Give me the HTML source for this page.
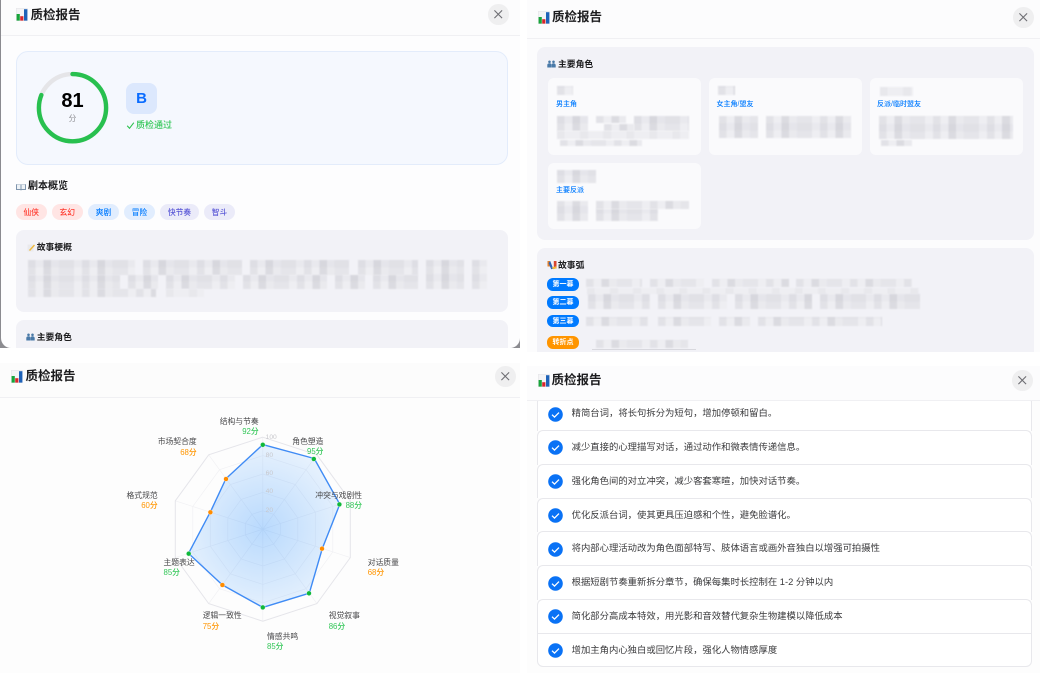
<!DOCTYPE html>
<html lang="zh-CN">
<head>
<meta charset="utf-8">
<title>质检报告</title>
<style>
*{box-sizing:border-box;margin:0;padding:0}
html,body{width:1040px;height:687px;overflow:hidden;background:#fff}
body{font-family:"Liberation Sans","Noto Sans CJK SC",sans-serif;color:#1c1c1e}
#w{position:absolute;left:0;top:0;width:1040px;height:687px;overflow:hidden;background:#fff;filter:blur(.35px)}
.a,.panel,.m,.t,.box,.card,.tag,.badge,.close,.row,.lb{position:absolute}
.t{white-space:nowrap;line-height:1}
.panel{background:#fdfdfe;overflow:hidden}
.hdr{position:absolute;left:0;right:0;top:0;background:#fcfcfd;border-bottom:1px solid #f0f0f3}
.title{font-size:12.5px;font-weight:600;color:#1c1c1e}
.close{width:20.5px;height:20.5px;border-radius:50%;background:#efeff0}
.close svg{position:absolute;left:0;top:0}
.box{background:#f2f2f7;border-radius:8px}
.card{background:#fafafc;border-radius:6px}
.h{font-size:8.8px;font-weight:600;color:#1c1c1e}
.role{font-size:7px;color:#007aff;font-weight:500}
.tag{height:16px;border-radius:8px;font-size:7.7px;line-height:17px;text-align:center;font-weight:500}
.red{background:#ffe5e4;color:#ff3b30}
.blue{background:#e1edfe;color:#007aff}
.ind{background:#ebebf9;color:#5856d6}
.badge{left:547px;width:32px;height:12.5px;border-radius:6px;background:#007aff;color:#fff;font-size:7px;line-height:14px;text-align:center;font-weight:600}
.m{filter:blur(.8px);background-color:#e9e9ee;background-image:repeating-linear-gradient(90deg,rgba(110,110,125,.09) 0 7.7px,rgba(110,110,125,0) 7.7px 15.4px,rgba(110,110,125,.15) 15.4px 23.1px,rgba(110,110,125,.03) 23.1px 30.8px,rgba(110,110,125,.07) 30.8px 46.2px,rgba(110,110,125,0) 46.2px 53.9px),repeating-linear-gradient(0deg,rgba(255,255,255,.22) 0 7.5px,rgba(255,255,255,0) 7.5px 15px)}
.l{background-color:#eeeef2;background-image:repeating-linear-gradient(90deg,rgba(110,110,125,.05) 0 7.7px,rgba(110,110,125,0) 7.7px 23.1px)}
.row{left:10px;width:495.3px;height:34.5px;background:#fff;border:1px solid #e8e8ec;border-bottom:0;border-radius:6px 6px 0 0}
.row .c{position:absolute;left:9.6px;top:9.4px}
.row .x{position:absolute;left:33.6px;top:0;line-height:32.5px;font-size:9.35px;color:#3a3a3c;white-space:nowrap}
.lb{font-size:7.8px;line-height:10.2px;color:#48484a;white-space:nowrap}
.lb b{display:block;font-weight:500}
.g{color:#34c759}.o{color:#ff9500}
.tick{font-size:6.7px;color:#c7c7cc;position:absolute;left:265.6px;line-height:1}
</style>
</head>
<body>
<div id="w">

<!-- dark edge behind first panel -->
<div class="a" style="left:0;top:0;width:520px;height:348px;background:#8b8b90"></div>

<!-- TOP LEFT -->
<div class="panel" style="left:1px;top:0;width:519px;height:348px;border-radius:0 0 10px 10px">
  <div class="hdr" style="height:36px"></div>
</div>
<svg class="a" style="left:16px;top:8px" width="12" height="13" viewBox="0 0 12 13"><rect x=".3" y=".3" width="11" height="12.4" fill="#f4f4f6" stroke="#e2e2e6" stroke-width=".5"/><rect x=".6" y="6" width="3.2" height="6.6" fill="#17a53a"/><rect x="4.2" y="8.2" width="3.2" height="4.4" fill="#d8262c"/><rect x="8" y="1.2" width="3.4" height="11.4" fill="#1e62b8"/></svg>
<div class="t title" style="left:30.5px;top:8.5px">质检报告</div>
<div class="close" style="left:488px;top:4px"><svg width="20.5" height="20.5"><path d="M6.4 6.4l7.7 7.7M14.1 6.4l-7.7 7.7" stroke="#6e6e73" stroke-width="1.1" fill="none"/></svg></div>

<div class="a" style="left:16px;top:51px;width:492px;height:113.5px;background:#f5f8fe;border:1px solid #e3ecfb;border-radius:12px"></div>
<svg class="a" style="left:36px;top:71px" width="73" height="73" viewBox="0 0 73 73"><circle cx="36.5" cy="36.7" r="33.6" fill="none" stroke="#e5e5e8" stroke-width="4.4"/><circle cx="36.5" cy="36.7" r="33.6" fill="none" stroke="#28c04f" stroke-width="4.4" stroke-linecap="round" stroke-dasharray="171 212" transform="rotate(-90 36.5 36.7)"/></svg>
<div class="t" style="left:52px;width:41px;text-align:center;top:91px;font-size:20px;font-weight:700;color:#000">81</div>
<div class="t" style="left:52px;width:41px;text-align:center;top:115px;font-size:7.7px;color:#8e8e93">分</div>
<div class="a" style="left:126px;top:83px;width:31px;height:31px;border-radius:8px;background:#dce8fd;color:#0a6cff;font-size:15px;font-weight:700;line-height:31px;text-align:center">B</div>
<svg class="a" style="left:126px;top:121px" width="9" height="9"><path d="M1.2 4.8l2.3 2.5 4.3-5.6" fill="none" stroke="#2cc24f" stroke-width="1.1"/></svg>
<div class="t" style="left:136px;top:121px;font-size:9px;color:#34c759;font-weight:500">质检通过</div>

<svg class="a" style="left:16px;top:183px" width="10" height="8" viewBox="0 0 10 8"><path d="M0 1.2h4.6l.4.5.4-.5H10V7H5.6l-.6.6-.6-.6H0z" fill="#7f95ad"/><path d="M1 1.6h3.5V6H1zM5.5 1.6H9V6H5.5z" fill="#eef2f6"/></svg>
<div class="t" style="left:28px;top:182px;font-size:10px;font-weight:600">剧本概览</div>

<div class="tag red" style="left:16px;top:204px;width:30.5px">仙侠</div>
<div class="tag red" style="left:52px;top:204px;width:30.5px">玄幻</div>
<div class="tag blue" style="left:88px;top:204px;width:31px">爽剧</div>
<div class="tag blue" style="left:124px;top:204px;width:31px">冒险</div>
<div class="tag ind" style="left:160px;top:204px;width:39px">快节奏</div>
<div class="tag ind" style="left:204px;top:204px;width:31px">智斗</div>

<div class="box" style="left:16px;top:230px;width:492px;height:82px"></div>
<svg class="a" style="left:27px;top:243px" width="8" height="9" viewBox="0 0 8 9"><rect x=".5" y="1.5" width="6" height="7" fill="#e9e9ec"/><path d="M2 7l5-5.5 1 1L3 8z" fill="#f0b93a"/></svg>
<div class="t h" style="left:36.7px;top:242.5px">故事梗概</div>
<div class="m" style="left:28px;top:260px;width:107px;height:15px"></div>
<div class="m" style="left:143px;top:260px;width:99px;height:15px"></div>
<div class="m" style="left:250px;top:260px;width:99px;height:15px"></div>
<div class="m" style="left:358px;top:260px;width:60px;height:15px"></div>
<div class="m" style="left:426px;top:260px;width:38px;height:29px"></div>
<div class="m" style="left:472px;top:260px;width:15px;height:29px"></div>
<div class="m" style="left:28px;top:275px;width:92px;height:14px"></div>
<div class="m" style="left:128px;top:275px;width:30px;height:14px"></div>
<div class="m" style="left:166px;top:275px;width:69px;height:14px"></div>
<div class="m" style="left:243px;top:275px;width:84px;height:14px"></div>
<div class="m" style="left:335px;top:275px;width:30px;height:14px"></div>
<div class="m" style="left:373px;top:275px;width:45px;height:14px"></div>
<div class="m" style="left:28px;top:289px;width:128px;height:8px"></div>
<div class="m l" style="left:166px;top:289px;width:38px;height:8px"></div>

<div class="box" style="left:16px;top:320px;width:492px;height:28px;border-radius:8px 8px 0 0"></div>
<svg class="a" style="left:26px;top:333px" width="9" height="8" viewBox="0 0 9 8"><g fill="#4a7aa8"><circle cx="2.5" cy="1.8" r="1.3"/><circle cx="6.5" cy="1.8" r="1.3"/><path d="M.3 7.5V5q0-1.8 2.2-1.8T4.4 5v2.5zM4.6 7.5V5q0-1.8 1.9-1.8T8.7 5v2.5z"/></g></svg>
<div class="t h" style="left:36.7px;top:332.5px">主要角色</div>

<!-- TOP RIGHT -->
<div class="panel" style="left:527px;top:0;width:513px;height:352px;background:#fcfcfd">
  <div class="hdr" style="height:39px;background:#fcfcfd"></div>
</div>
<svg class="a" style="left:538px;top:11px" width="12" height="13" viewBox="0 0 12 13"><rect x=".3" y=".3" width="11" height="12.4" fill="#f4f4f6" stroke="#e2e2e6" stroke-width=".5"/><rect x=".6" y="6" width="3.2" height="6.6" fill="#17a53a"/><rect x="4.2" y="8.2" width="3.2" height="4.4" fill="#d8262c"/><rect x="8" y="1.2" width="3.4" height="11.4" fill="#1e62b8"/></svg>
<div class="t title" style="left:552px;top:11px">质检报告</div>
<div class="close" style="left:1013px;top:7px"><svg width="20.5" height="20.5"><path d="M6.4 6.4l7.7 7.7M14.1 6.4l-7.7 7.7" stroke="#6e6e73" stroke-width="1.1" fill="none"/></svg></div>

<div class="box" style="left:537px;top:47px;width:497px;height:193px"></div>
<svg class="a" style="left:547px;top:60px" width="9" height="8" viewBox="0 0 9 8"><g fill="#4a7aa8"><circle cx="2.5" cy="1.8" r="1.3"/><circle cx="6.5" cy="1.8" r="1.3"/><path d="M.3 7.5V5q0-1.8 2.2-1.8T4.4 5v2.5zM4.6 7.5V5q0-1.8 1.9-1.8T8.7 5v2.5z"/></g></svg>
<div class="t h" style="left:558px;top:59.5px">主要角色</div>

<div class="card" style="left:548px;top:78px;width:153px;height:77px"></div>
<div class="card" style="left:709px;top:78px;width:153px;height:77px"></div>
<div class="card" style="left:870px;top:78px;width:153px;height:77px"></div>
<div class="card" style="left:548px;top:163px;width:153px;height:66px"></div>

<div class="m" style="left:557px;top:86px;width:16px;height:9px"></div>
<div class="t role" style="left:556px;top:101px">男主角</div>
<div class="m" style="left:557px;top:116px;width:31px;height:15px"></div>
<div class="m" style="left:596px;top:116px;width:30px;height:7px"></div>
<div class="m" style="left:634px;top:116px;width:55px;height:15px"></div>
<div class="m" style="left:604px;top:124px;width:30px;height:7px"></div>
<div class="m l" style="left:557px;top:131px;width:132px;height:8px"></div>
<div class="m" style="left:560px;top:140px;width:82px;height:6px"></div>

<div class="m" style="left:718px;top:86px;width:17px;height:9px"></div>
<div class="t role" style="left:716.5px;top:101px">女主角/盟友</div>
<div class="m" style="left:719px;top:116px;width:39px;height:22px"></div>
<div class="m" style="left:766px;top:116px;width:85px;height:22px"></div>

<div class="m l" style="left:880px;top:87px;width:33px;height:9px"></div>
<div class="t role" style="left:877px;top:101px">反派/临时盟友</div>
<div class="m" style="left:879px;top:116px;width:134px;height:23px"></div>
<div class="m" style="left:881px;top:140px;width:31px;height:6px"></div>

<div class="m" style="left:557px;top:170px;width:39px;height:13px"></div>
<div class="t role" style="left:556px;top:186.5px">主要反派</div>
<div class="m" style="left:557px;top:201px;width:31px;height:20px"></div>
<div class="m" style="left:596px;top:201px;width:93px;height:8px"></div>
<div class="m" style="left:596px;top:209px;width:62px;height:12px"></div>

<div class="box" style="left:537px;top:248px;width:497px;height:104px;border-radius:8px 8px 0 0"></div>
<svg class="a" style="left:547px;top:260px" width="10" height="10" viewBox="0 0 10 10"><path d="M.5 1h2.6v5.5H.5z" fill="#e8832a"/><path d="M3.2 1l3 7.6-2 .7L1.500 3z" fill="#2b62b8"/><path d="M6.800 1h2.700v7.500H6.800z" fill="#d8452f"/><path d="M4.600 7.500l1.800 1.800 3.100-1-.3-2z" fill="#f0b93a"/></svg>
<div class="t h" style="left:558px;top:260.500px">故事弧</div>

<div class="badge" style="top:278px">第一幕</div>
<div class="badge" style="top:296px">第二幕</div>
<div class="badge" style="top:314.500px">第三幕</div>
<div class="badge" style="top:336px;background:#ff9500">转折点</div>

<div class="m" style="left:586px;top:279px;width:56px;height:8px"></div>
<div class="m" style="left:650px;top:279px;width:54px;height:8px"></div>
<div class="m" style="left:712px;top:279px;width:77px;height:8px"></div>
<div class="m" style="left:796px;top:279px;width:116px;height:8px"></div>
<div class="m l" style="left:587px;top:288px;width:332px;height:6px"></div>
<div class="m" style="left:588px;top:294px;width:62px;height:15px"></div>
<div class="m" style="left:658px;top:294px;width:69px;height:15px"></div>
<div class="m" style="left:735px;top:294px;width:77px;height:15px"></div>
<div class="m" style="left:820px;top:294px;width:100px;height:15px"></div>
<div class="m" style="left:586px;top:317px;width:62px;height:9px"></div>
<div class="m" style="left:658px;top:317px;width:53px;height:9px"></div>
<div class="m" style="left:719px;top:317px;width:31px;height:9px"></div>
<div class="m" style="left:758px;top:317px;width:124px;height:9px"></div>
<div class="m" style="left:596px;top:340px;width:92px;height:8px"></div>
<div class="a" style="left:592px;top:349px;width:104px;height:1px;background:#d8d8de"></div>

<!-- BOTTOM LEFT -->
<div class="panel" style="left:0;top:363px;width:520px;height:310px;background:#fdfdfd">
  <div class="hdr" style="height:34.500px;background:#fcfcfc"></div>
</div>
<svg class="a" style="left:11px;top:369.500px" width="12" height="13" viewBox="0 0 12 13"><rect x=".3" y=".3" width="11" height="12.400" fill="#f4f4f6" stroke="#e2e2e6" stroke-width=".5"/><rect x=".6" y="6" width="3.200" height="6.600" fill="#17a53a"/><rect x="4.200" y="8.200" width="3.200" height="4.400" fill="#d8262c"/><rect x="8" y="1.200" width="3.400" height="11.400" fill="#1e62b8"/></svg>
<div class="t title" style="left:25.500px;top:370px">质检报告</div>
<div class="close" style="left:495px;top:366px"><svg width="20.5" height="20.5"><path d="M6.400 6.400l7.700 7.700M14.100 6.400l-7.700 7.700" stroke="#6e6e73" stroke-width="1.100" fill="none"/></svg></div>

<svg class="a" style="left:0;top:0" width="520" height="687" viewBox="0 0 520 687">
  <defs>
    <radialGradient id="rf" gradientUnits="userSpaceOnUse" cx="262.800" cy="529.200" r="88">
      <stop offset="0" stop-color="#007aff" stop-opacity=".27"/>
      <stop offset="1" stop-color="#007aff" stop-opacity=".08"/>
    </radialGradient>
  </defs>
  <g transform="translate(262.800 529.200)" fill="none">
    <g stroke="#f1f1f4" stroke-width=".7">
      <polygon vector-effect="non-scaling-stroke" transform="scale(18.400)" points="0,-1 .5878,-.809 .9511,-.309 .9511,.309 .5878,.809 0,1 -.5878,.809 -.9511,.309 -.9511,-.309 -.5878,-.809"/>
      <polygon vector-effect="non-scaling-stroke" transform="scale(36.800)" points="0,-1 .5878,-.809 .9511,-.309 .9511,.309 .5878,.809 0,1 -.5878,.809 -.9511,.309 -.9511,-.309 -.5878,-.809"/>
      <polygon vector-effect="non-scaling-stroke" transform="scale(55.200)" points="0,-1 .5878,-.809 .9511,-.309 .9511,.309 .5878,.809 0,1 -.5878,.809 -.9511,.309 -.9511,-.309 -.5878,-.809"/>
      <polygon vector-effect="non-scaling-stroke" transform="scale(73.600)" points="0,-1 .5878,-.809 .9511,-.309 .9511,.309 .5878,.809 0,1 -.5878,.809 -.9511,.309 -.9511,-.309 -.5878,-.809"/>
      <path d="M0 0V-92M0 0L54.100 -74.400M0 0L87.500 -28.400M0 0L87.500 28.400M0 0L54.100 74.400M0 0V92M0 0L-54.100 74.400M0 0L-87.500 28.400M0 0L-87.500 -28.400M0 0L-54.100 -74.400"/>
    </g>
    <polygon vector-effect="non-scaling-stroke" stroke="#e5e5ea" stroke-width="1" transform="scale(92)" points="0,-1 .5878,-.809 .9511,-.309 .9511,.309 .5878,.809 0,1 -.5878,.809 -.9511,.309 -.9511,-.309 -.5878,-.809"/>
  </g>
  <polygon points="262.800,444.600 314.200,458.500 339.800,504.200 322.300,548.500 309.300,593.200 262.800,607.400 222.300,584.900 188.500,553.400 210.300,512.100 226,478.600" fill="url(#rf)" stroke="#3f8bf5" stroke-width="1.400" stroke-linejoin="round"/>
  <g stroke="#fff" stroke-width=".5" stroke-opacity=".7">
    <circle cx="262.800" cy="444.800" r="2.400" fill="#0fb83a"/>
    <circle cx="313.800" cy="459" r="2.400" fill="#0fb83a"/>
    <circle cx="339.400" cy="504.400" r="2.400" fill="#0fb83a"/>
    <circle cx="322" cy="548.700" r="2.400" fill="#ff8c00"/>
    <circle cx="309" cy="593.300" r="2.400" fill="#0fb83a"/>
    <circle cx="262.800" cy="607.400" r="2.400" fill="#0fb83a"/>
    <circle cx="222.400" cy="585" r="2.400" fill="#ff8c00"/>
    <circle cx="188.700" cy="553.700" r="2.400" fill="#0fb83a"/>
    <circle cx="210.400" cy="512.300" r="2.400" fill="#ff8c00"/>
    <circle cx="226" cy="479" r="2.400" fill="#ff8c00"/>
  </g>
</svg>
<div class="tick" style="top:434.500px">100</div>
<div class="tick" style="top:452.600px">80</div>
<div class="tick" style="top:471px">60</div>
<div class="tick" style="top:489.300px">40</div>
<div class="tick" style="top:507.700px">20</div>

<div class="lb" style="right:781.300px;top:417px;text-align:right">结构与节奏<b class="g">92分</b></div>
<div class="lb" style="left:292.300px;top:437px;text-align:right">角色塑造<b class="g">95分</b></div>
<div class="lb" style="left:315.300px;top:491px;text-align:right">冲突与戏剧性<b class="g">88分</b></div>
<div class="lb" style="left:367.700px;top:557.700px">对话质量<b class="o">68分</b></div>
<div class="lb" style="left:328.700px;top:611.300px">视觉叙事<b class="g">86分</b></div>
<div class="lb" style="left:267px;top:632px">情感共鸣<b class="g">85分</b></div>
<div class="lb" style="left:202.700px;top:611.300px">逻辑一致性<b class="o">75分</b></div>
<div class="lb" style="left:163.500px;top:557.700px">主题表达<b class="g">85分</b></div>
<div class="lb" style="right:882.300px;top:491px;text-align:right">格式规范<b class="o">60分</b></div>
<div class="lb" style="right:843.300px;top:437.300px;text-align:right">市场契合度<b class="o">68分</b></div>

<!-- BOTTOM RIGHT -->
<div class="panel" style="left:527px;top:366px;width:513px;height:307px;background:#fdfdfd">
  <div class="row" style="top:30.200px"><svg class="c" width="15" height="15" viewBox="0 0 15 15"><circle cx="7.500" cy="7.500" r="7.300" fill="#0a72f5"/><path d="M4 7.700l2.500 2.400L11 5.600" fill="none" stroke="#fff" stroke-width="1.300"/></svg><div class="x">精简台词，将长句拆分为短句，增加停顿和留白。</div></div>
  <div class="row" style="top:64px"><svg class="c" width="15" height="15" viewBox="0 0 15 15"><circle cx="7.500" cy="7.500" r="7.300" fill="#0a72f5"/><path d="M4 7.700l2.500 2.400L11 5.600" fill="none" stroke="#fff" stroke-width="1.300"/></svg><div class="x">减少直接的心理描写对话，通过动作和微表情传递信息。</div></div>
  <div class="row" style="top:97.800px"><svg class="c" width="15" height="15" viewBox="0 0 15 15"><circle cx="7.500" cy="7.500" r="7.300" fill="#0a72f5"/><path d="M4 7.700l2.500 2.400L11 5.600" fill="none" stroke="#fff" stroke-width="1.300"/></svg><div class="x">强化角色间的对立冲突，减少客套寒暄，加快对话节奏。</div></div>
  <div class="row" style="top:131.600px"><svg class="c" width="15" height="15" viewBox="0 0 15 15"><circle cx="7.500" cy="7.500" r="7.300" fill="#0a72f5"/><path d="M4 7.700l2.500 2.400L11 5.600" fill="none" stroke="#fff" stroke-width="1.300"/></svg><div class="x">优化反派台词，使其更具压迫感和个性，避免脸谱化。</div></div>
  <div class="row" style="top:165.400px"><svg class="c" width="15" height="15" viewBox="0 0 15 15"><circle cx="7.500" cy="7.500" r="7.300" fill="#0a72f5"/><path d="M4 7.700l2.500 2.400L11 5.600" fill="none" stroke="#fff" stroke-width="1.300"/></svg><div class="x">将内部心理活动改为角色面部特写、肢体语言或画外音独白以增强可拍摄性</div></div>
  <div class="row" style="top:199.200px"><svg class="c" width="15" height="15" viewBox="0 0 15 15"><circle cx="7.500" cy="7.500" r="7.300" fill="#0a72f5"/><path d="M4 7.700l2.500 2.400L11 5.600" fill="none" stroke="#fff" stroke-width="1.300"/></svg><div class="x">根据短剧节奏重新拆分章节，确保每集时长控制在 1-2 分钟以内</div></div>
  <div class="row" style="top:233px"><svg class="c" width="15" height="15" viewBox="0 0 15 15"><circle cx="7.500" cy="7.500" r="7.300" fill="#0a72f5"/><path d="M4 7.700l2.500 2.400L11 5.600" fill="none" stroke="#fff" stroke-width="1.300"/></svg><div class="x">简化部分高成本特效，用光影和音效替代复杂生物建模以降低成本</div></div>
  <div class="row" style="top:266.800px;height:34px;border-bottom:1px solid #e8e8ec;border-radius:0 0 6px 6px"><svg class="c" width="15" height="15" viewBox="0 0 15 15"><circle cx="7.500" cy="7.500" r="7.300" fill="#0a72f5"/><path d="M4 7.700l2.500 2.400L11 5.600" fill="none" stroke="#fff" stroke-width="1.300"/></svg><div class="x">增加主角内心独白或回忆片段，强化人物情感厚度</div></div>
  <div class="hdr" style="height:34.500px;background:#fcfcfd"></div>
</div>
<svg class="a" style="left:538px;top:373.500px" width="12" height="13" viewBox="0 0 12 13"><rect x=".3" y=".3" width="11" height="12.400" fill="#f4f4f6" stroke="#e2e2e6" stroke-width=".5"/><rect x=".6" y="6" width="3.200" height="6.600" fill="#17a53a"/><rect x="4.200" y="8.200" width="3.200" height="4.400" fill="#d8262c"/><rect x="8" y="1.200" width="3.400" height="11.400" fill="#1e62b8"/></svg>
<div class="t title" style="left:551.500px;top:373.500px">质检报告</div>
<div class="close" style="left:1012px;top:370px"><svg width="20.5" height="20.5"><path d="M6.400 6.400l7.700 7.700M14.100 6.400l-7.700 7.700" stroke="#6e6e73" stroke-width="1.100" fill="none"/></svg></div>

</div>
</body>
</html>
